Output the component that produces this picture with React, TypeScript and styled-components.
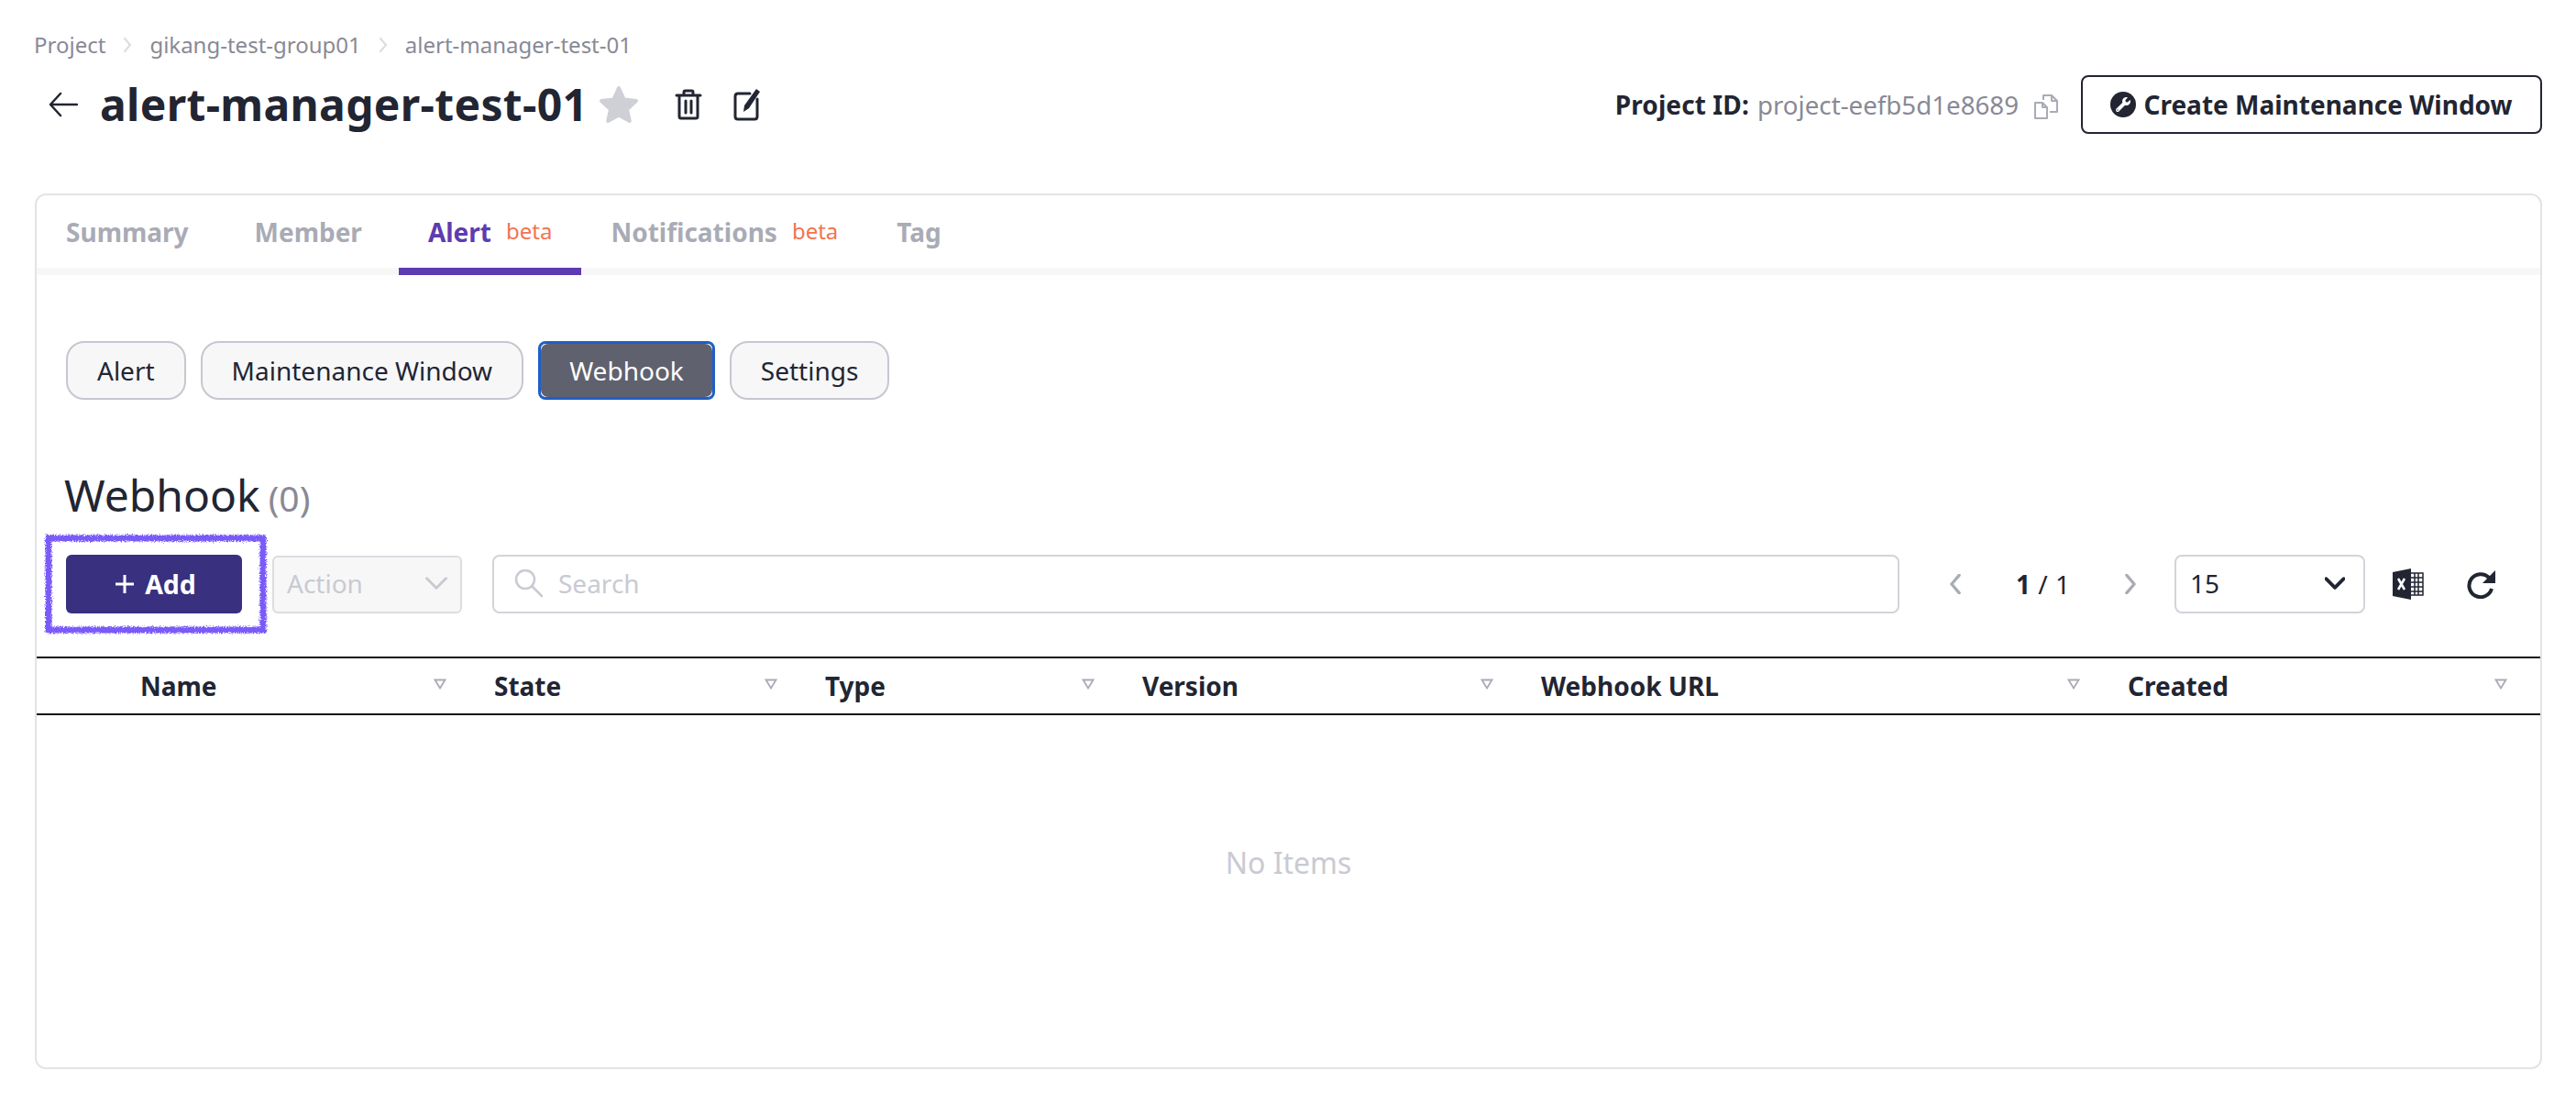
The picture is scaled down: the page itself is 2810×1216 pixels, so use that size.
import React from "react";
import styled, { createGlobalStyle } from "styled-components";
import { FaWrench } from "react-icons/fa";

const GlobalStyle = createGlobalStyle`
  html, body {
    margin: 0;
    background: #fff;
  }
  body {
    font-family: "Noto Sans", "Liberation Sans", sans-serif;
    color: #222532;
  }
  * {
    box-sizing: border-box;
  }
`;

const S = {
  Page: styled.div`
    width: 2810px;
    height: 1216px;
    padding: 32px 37px 0 38px;
    overflow: hidden;
  `,
  Breadcrumb: styled.div`
    display: flex;
    align-items: center;
    height: 34px;
    margin-left: -1px;
    font-size: 24px;
    line-height: 34px;
    color: #898995;
    gap: 16px;
  `,
  TitleRow: styled.div`
    display: flex;
    align-items: center;
    height: 64px;
    margin-top: 16px;
  `,
  BackButton: styled.span`
    display: flex;
    margin: 0 24px 0 15px;
  `,
  Title: styled.h1`
    margin: 0;
    font-size: 48px;
    line-height: 64px;
    font-weight: 700;
    letter-spacing: 0.33px;
    color: #222532;
  `,
  TitleIcon: styled.span<{ $left: number }>`
    display: flex;
    margin-left: ${(p) => p.$left}px;
  `,
  ProjectInfo: styled.div`
    display: flex;
    align-items: center;
    margin-left: auto;
    font-size: 28px;
  `,
  ProjectLabel: styled.b`
    font-weight: 700;
    letter-spacing: 0.1px;
    margin-right: 9px;
  `,
  ProjectId: styled.span`
    color: #898995;
    font-size: 27.7px;
  `,
  CopyIcon: styled.span`
    display: flex;
    margin: 4px 24px 0 16px;
  `,
  OutlineButton: styled.button`
    display: flex;
    align-items: center;
    justify-content: center;
    gap: 8px;
    width: 503px;
    height: 64px;
    padding: 0;
    background: #fff;
    border: 2px solid #222532;
    border-radius: 8px;
    color: #222532;
    font-family: inherit;
    font-size: 28px;
    font-weight: 700;
  `,
  WrenchBadge: styled.span`
    display: flex;
    align-items: center;
    justify-content: center;
    width: 28px;
    height: 28px;
    border-radius: 50%;
    background: #222532;
    color: #fff;
    font-size: 16px;
  `,
  Card: styled.section`
    height: 955px;
    margin-top: 65px;
    border: 2px solid #e3e3e8;
    border-radius: 12px;
    overflow: hidden;
  `,
  TabBar: styled.nav`
    display: flex;
    height: 87px;
    border-bottom: 8px solid #f7f7f8;
  `,
  Tab: styled.div<{ $active?: boolean; $flush?: boolean }>`
    display: flex;
    align-items: center;
    gap: 16px;
    height: 87px;
    padding: 0 32px;
    margin-right: ${(p) => (p.$flush ? 0 : 8)}px;
    border-bottom: 8px solid ${(p) => (p.$active ? "#5e3bb0" : "transparent")};
    color: ${(p) => (p.$active ? "#5e3bb0" : "#a9abb5")};
    font-size: 28px;
    font-weight: 700;
  `,
  Beta: styled.span`
    margin-top: -2px;
    color: #f2744f;
    font-size: 24px;
    font-weight: 400;
  `,
  SubTabs: styled.div`
    display: flex;
    gap: 16px;
    margin: 72px 0 0 32px;
  `,
  SubTab: styled.div<{ $active?: boolean }>`
    position: relative;
    isolation: isolate;
    display: flex;
    align-items: center;
    height: 64px;
    padding: 0 ${(p) => (p.$active ? 31 : 32)}px;
    background: ${(p) => (p.$active ? "#fff" : "#f7f7f8")};
    border: ${(p) => (p.$active ? "3px solid #1f5fc8" : "2px solid #c6c7cf")};
    border-radius: ${(p) => (p.$active ? 8 : 20)}px;
    color: ${(p) => (p.$active ? "#fff" : "#222532")};
    font-size: 28px;

    ${(p) =>
      p.$active &&
      `
      &::before {
        content: "";
        position: absolute;
        inset: 0;
        z-index: -1;
        background: #60616e;
        border-radius: 8px;
      }
    `}
  `,
  Heading: styled.div`
    display: flex;
    align-items: baseline;
    gap: 9px;
    height: 64px;
    margin: 72px 0 0 30px;
    font-size: 48px;
    line-height: 64px;
    color: #222532;
  `,
  Count: styled.span`
    font-size: 39px;
    color: #898995;
  `,
  Toolbar: styled.div`
    display: flex;
    align-items: center;
    height: 64px;
    margin: 33px 37px 0 32px;
  `,
  AddWrap: styled.div`
    position: relative;
    display: flex;
  `,
  Annotation: styled.svg`
    position: absolute;
    left: -24px;
    top: -23px;
    pointer-events: none;
  `,
  AddButton: styled.button`
    display: flex;
    align-items: center;
    justify-content: center;
    gap: 12px;
    width: 192px;
    height: 64px;
    padding: 0 0 0 4px;
    background: #39307f;
    border: 0;
    border-radius: 6px;
    color: #fff;
    font-family: inherit;
    font-size: 28.5px;
    font-weight: 700;
  `,
  ActionSelect: styled.div`
    display: flex;
    align-items: center;
    justify-content: space-between;
    width: 207px;
    height: 63px;
    margin-left: 33px;
    padding: 0 14px 3px 14px;
    background: #f7f7f8;
    border: 2px solid #dcdce1;
    border-radius: 6px;
    color: #c9cad2;
    font-size: 28px;
  `,
  SearchBox: styled.div`
    display: flex;
    align-items: center;
    gap: 16px;
    width: 1535px;
    height: 64px;
    margin-left: 33px;
    padding: 0 16px 3px 22px;
    border: 2px solid #d3d4da;
    border-radius: 8px;
    color: #c9cad2;
    font-size: 28px;
  `,
  Pager: styled.div`
    display: flex;
    align-items: center;
    width: 300px;
    padding: 0 37px 0 50px;
    justify-content: space-between;
    font-size: 28px;
  `,
  PageText: styled.span`
    color: #222532;
    word-spacing: 1px;
    b {
      font-weight: 700;
    }
  `,
  SizeSelect: styled.div`
    display: flex;
    align-items: center;
    justify-content: space-between;
    width: 208px;
    height: 64px;
    padding: 0 20px 2px 15px;
    border: 2px solid #d3d4da;
    border-radius: 8px;
    font-size: 28px;
  `,
  ExcelIcon: styled.span`
    display: flex;
    margin-left: 29px;
  `,
  RefreshIcon: styled.span`
    display: flex;
    margin-left: 46px;
  `,
  TableHead: styled.div`
    display: grid;
    grid-template-columns: 97px 386px 361px 346px 435px 640px 1fr;
    height: 64px;
    margin-top: 47px;
    border-top: 2px solid #111;
    border-bottom: 2px solid #111;
  `,
  HeadCell: styled.div`
    display: flex;
    align-items: center;
    justify-content: space-between;
    padding: 0 36px 0 16px;
    font-size: 28px;
    font-weight: 700;
  `,
  SortMark: styled.svg`
    margin-top: -4px;
  `,
  Empty: styled.div`
    display: flex;
    align-items: center;
    justify-content: center;
    height: 180px;
    margin-top: 70px;
    color: #c9cad2;
    font-size: 32px;
  `,
};

const Chevron = ({ size = 16, color = "#c9cad2", dir = "right", width = 2 }: { size?: number; color?: string; dir?: "left" | "right" | "down"; width?: number }) => {
  const d = dir === "right" ? "M5 1l6 7-6 7" : dir === "left" ? "M11 1L5 8l6 7" : "M1 4.5l7 7 7-7";
  return (
    <svg width={size} height={size} viewBox="0 0 16 16" fill="none" stroke={color} strokeWidth={width} strokeLinecap="round" strokeLinejoin="round">
      <path d={d} />
    </svg>
  );
};

const columns = ["Name", "State", "Type", "Version", "Webhook URL", "Created"];
const tabs = [
  { label: "Summary" },
  { label: "Member" },
  { label: "Alert", active: true, beta: true },
  { label: "Notifications", beta: true },
  { label: "Tag" },
];
const subTabs = ["Alert", "Maintenance Window", "Webhook", "Settings"];
const crumbs = ["Project", "gikang-test-group01", "alert-manager-test-01"];

const App = () => {
  return (
    <S.Page>
      <GlobalStyle />
      <S.Breadcrumb>
        {crumbs.map((crumb, i) => (
          <React.Fragment key={crumb}>
            {i > 0 && <Chevron size={16} color="#dcdce1" />}
            <span>{crumb}</span>
          </React.Fragment>
        ))}
      </S.Breadcrumb>

      <S.TitleRow>
        <S.BackButton>
          <svg width="32" height="28" viewBox="0 0 32 28" fill="none" stroke="#222532" strokeWidth="2.500" strokeLinecap="round" strokeLinejoin="round">
            <path d="M31 14H2M13 2L2 14l11 12" />
          </svg>
        </S.BackButton>
        <S.Title>alert-manager-test-01</S.Title>
        <S.TitleIcon $left={12}>
          <svg width="44" height="42" viewBox="0 0 44 42" fill="#cfd0d6" stroke="#cfd0d6" strokeWidth="4" strokeLinejoin="round">
            <path d="M22 3l5.6 12.4L41 17l-10 9.2L33.800 39 22 32.500 10.200 39 13 26.200 3 17l13.400-1.600z" />
          </svg>
        </S.TitleIcon>
        <S.TitleIcon $left={39}>
          <svg width="30" height="34" viewBox="0 0 30 34" fill="none" stroke="#222532" strokeWidth="3" strokeLinejoin="round" strokeLinecap="round">
            <path d="M2 7h26M10 7V3.500C10 2.600 10.600 2 11.500 2h7c.9 0 1.500.6 1.500 1.500V7M5 7v23c0 1.200.8 2 2 2h16c1.200 0 2-.8 2-2V7M12 13v13M18 13v13" />
          </svg>
        </S.TitleIcon>
        <S.TitleIcon $left={34}>
          <svg width="30" height="36" viewBox="0 0 30 36" fill="none">
            <path d="M18 6H5C3 6 2 7 2 9v22c0 2 1 3 3 3h18c2 0 3-1 3-3V12" stroke="#222532" strokeWidth="3" strokeLinecap="round" />
            <path d="M25 1l4 3-12 18-6 4 1-7z" fill="#222532" />
          </svg>
        </S.TitleIcon>
        <S.ProjectInfo>
          <S.ProjectLabel>Project ID:</S.ProjectLabel>
          <S.ProjectId>project-eefb5d1e8689</S.ProjectId>
          <S.CopyIcon>
            <svg width="28" height="28" viewBox="0 0 28 28" fill="none" stroke="#a9abb5" strokeWidth="2" strokeLinejoin="round">
              <path d="M2 10h8l5 5v12H2zM10 10v5h5M11 7V2h9l6 6v12h-8M20 2v6h6" />
            </svg>
          </S.CopyIcon>
        </S.ProjectInfo>
        <S.OutlineButton>
          <S.WrenchBadge>
            <FaWrench />
          </S.WrenchBadge>
          Create Maintenance Window
        </S.OutlineButton>
      </S.TitleRow>

      <S.Card>
        <S.TabBar>
          {tabs.map((tab) => (
            <S.Tab key={tab.label} $active={tab.active} $flush={tab.beta}>
              {tab.label}
              {tab.beta && <S.Beta>beta</S.Beta>}
            </S.Tab>
          ))}
        </S.TabBar>

        <S.SubTabs>
          {subTabs.map((label) => (
            <S.SubTab key={label} $active={label === "Webhook"}>
              {label}
            </S.SubTab>
          ))}
        </S.SubTabs>

        <S.Heading>
          Webhook <S.Count>(0)</S.Count>
        </S.Heading>

        <S.Toolbar>
          <S.AddWrap>
            <S.AddButton>
              <svg width="20" height="20" viewBox="0 0 20 20" stroke="#fff" strokeWidth="3">
                <path d="M10 0v20M0 10h20" />
              </svg>
              Add
            </S.AddButton>
            <S.Annotation width="244" height="110" viewBox="0 0 244 110" fill="none">
              <filter id="rough" x="-5%" y="-10%" width="110%" height="120%">
                <feTurbulence type="fractalNoise" baseFrequency="0.7" numOctaves="2" seed="4" />
                <feDisplacementMap in="SourceGraphic" scale="6" />
              </filter>
              <rect x="5" y="5" width="234" height="100" stroke="#7a5af8" strokeWidth="7" filter="url(#rough)" />
            </S.Annotation>
          </S.AddWrap>
          <S.ActionSelect>
            Action
            <Chevron size={24} dir="down" color="#c9cad2" />
          </S.ActionSelect>
          <S.SearchBox>
            <svg width="32" height="32" viewBox="0 0 32 32" fill="none" stroke="#c9cad2" strokeWidth="2.500" strokeLinecap="round">
              <circle cx="12" cy="12" r="10" />
              <path d="M19 19l11 11" />
            </svg>
            Search
          </S.SearchBox>
          <S.Pager>
            <Chevron size={22} dir="left" color="#a9abb5" width={2.4} />
            <S.PageText>
              <b>1</b> / 1
            </S.PageText>
            <Chevron size={22} dir="right" color="#a9abb5" width={2.4} />
          </S.Pager>
          <S.SizeSelect>
            15
            <Chevron size={22} dir="down" color="#222532" width={2.8} />
          </S.SizeSelect>
          <S.ExcelIcon>
            <svg width="36" height="34" viewBox="0 0 36 34" fill="none">
              <path d="M21 0v34L1 30V4z" fill="#222532" />
              <path d="M7 11l7 12M14 11L7 23" stroke="#fff" strokeWidth="2.500" />
              <path d="M21 5h13v24H21M25 5v24M29 5v24M21 10h13M21 15h13M21 20h13M21 25h13" stroke="#222532" strokeWidth="1.500" />
            </svg>
          </S.ExcelIcon>
          <S.RefreshIcon>
            <svg width="32" height="32" viewBox="0 0 32 32" fill="none">
              <path d="M24 9a12.500 12.500 0 1 0 3 12" stroke="#222532" strokeWidth="4" />
              <path d="M31 1v14H17z" fill="#222532" />
            </svg>
          </S.RefreshIcon>
        </S.Toolbar>

        <S.TableHead>
          <span />
          {columns.map((col) => (
            <S.HeadCell key={col}>
              {col}
              <S.SortMark width="14" height="12" viewBox="0 0 14 12" fill="none" stroke="#a9abb5" strokeWidth="1.800">
                <path d="M1.500 1.500h11L7 10.500z" />
              </S.SortMark>
            </S.HeadCell>
          ))}
        </S.TableHead>

        <S.Empty>No Items</S.Empty>
      </S.Card>
    </S.Page>
  );
};

export default App;
